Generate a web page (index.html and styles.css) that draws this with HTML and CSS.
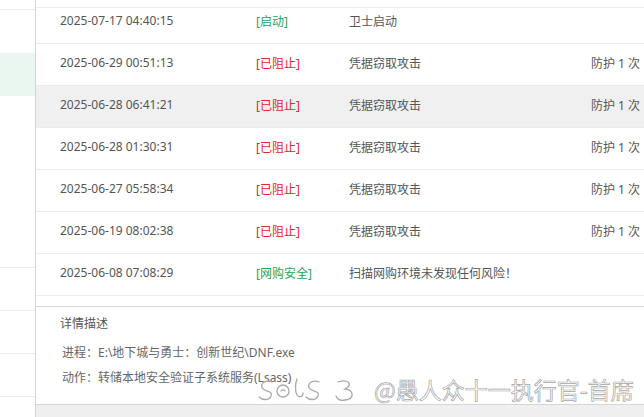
FILE: index.html
```html
<!DOCTYPE html>
<html lang="zh-CN">
<head>
  <meta charset="UTF-8">
  <title>防护日志</title>
  <link rel="stylesheet" href="styles.css">
</head>
<body>
  <div class="app">
    <aside class="side">
      <div class="side-top"></div>
      <div class="side-item active"></div>
      <div class="side-fill"></div>
      <div class="side-item"></div>
      <div class="side-item"></div>
      <div class="side-item"></div>
    </aside>

    <main class="main">
      <div class="head"></div>
      <div class="log">
        <div class="row first">
          <span class="c-time">2025-07-17 04:40:15</span>
          <span class="c-tag ok">[启动]</span>
          <span class="c-desc">卫士启动</span>
          <span class="c-count"></span>
        </div>
        <div class="row">
          <span class="c-time">2025-06-29 00:51:13</span>
          <span class="c-tag bad">[已阻止]</span>
          <span class="c-desc">凭据窃取攻击</span>
          <span class="c-count">防护 1 次</span>
        </div>
        <div class="row hover">
          <span class="c-time">2025-06-28 06:41:21</span>
          <span class="c-tag bad">[已阻止]</span>
          <span class="c-desc">凭据窃取攻击</span>
          <span class="c-count">防护 1 次</span>
        </div>
        <div class="row">
          <span class="c-time">2025-06-28 01:30:31</span>
          <span class="c-tag bad">[已阻止]</span>
          <span class="c-desc">凭据窃取攻击</span>
          <span class="c-count">防护 1 次</span>
        </div>
        <div class="row">
          <span class="c-time">2025-06-27 05:58:34</span>
          <span class="c-tag bad">[已阻止]</span>
          <span class="c-desc">凭据窃取攻击</span>
          <span class="c-count">防护 1 次</span>
        </div>
        <div class="row">
          <span class="c-time">2025-06-19 08:02:38</span>
          <span class="c-tag bad">[已阻止]</span>
          <span class="c-desc">凭据窃取攻击</span>
          <span class="c-count">防护 1 次</span>
        </div>
        <div class="row">
          <span class="c-time">2025-06-08 07:08:29</span>
          <span class="c-tag ok">[网购安全]</span>
          <span class="c-desc">扫描网购环境未发现任何风险！</span>
          <span class="c-count"></span>
        </div>
      </div>

      <section class="detail">
        <div class="detail-title">详情描述</div>
        <div class="detail-line">进程：E:\地下城与勇士：创新世纪\DNF.exe</div>
        <div class="detail-line">动作：转储本地安全验证子系统服务(Lsass)</div>
      </section>

      <div class="foot"></div>
    </main>
  </div>

  <div class="mark">
    <svg class="mark-logo" width="108" height="30" viewBox="0 0 108 30">
      <g fill="none" stroke="#a9a9a9" stroke-width="1.3" stroke-linecap="round">
        <path d="M16 8 C8 5 3 11 7 15 C11 18 17 17 15 22 C13 27 6 26 3 23"/>
        <circle cx="27" cy="17" r="6"/>
        <path d="M25 17 C26 15.5 28 15.5 29 17"/>
        <path d="M41 5 C39 10 39 17 41 21 C43 24 47 23 47 19"/>
        <path d="M63 8 C55 5 50 11 54 15 C58 18 64 17 62 22 C60 27 53 26 50 23"/>
        <path d="M82 8 C92 5 98 10 89 15 C98 16 99 25 89 26 C84 27 81 25 80 22"/>
      </g>
    </svg>
    <span class="mark-text">@愚人众十一执行官-首席</span>
  </div>
</body>
</html>
```

FILE: styles.css
```css
html, body {
  margin: 0;
  padding: 0;
}

body {
  width: 644px;
  height: 417px;
  overflow: hidden;
  background: #fff;
  font-family: "Noto Sans", "Noto Sans CJK SC", sans-serif;
  font-size: 12px;
  color: #555;
  position: relative;
}

.app {
  display: flex;
  height: 417px;
}

/* left nav, mostly cut off */
.side {
  width: 35px;
  border-right: 1px solid #d4d4d4;
  display: flex;
  flex-direction: column;
}

.side-top {
  height: 9px;
  border-bottom: 1px solid #ebebeb;
  flex-shrink: 0;
}

.side-item {
  height: 43px;
  border-bottom: 1px solid #ebebeb;
  box-sizing: border-box;
  flex-shrink: 0;
}

.side-item.active {
  margin-top: 43px;
  height: 43px;
  border-bottom: none;
  background: #eaf7f0;
}

.side-fill {
  height: 171px;
  border-bottom: 1px solid #ebebeb;
  flex-shrink: 0;
}

.main {
  flex: 1;
  display: flex;
  flex-direction: column;
  min-width: 0;
}

.head {
  height: 7px;
  border-bottom: 1px solid #ececec;
  flex-shrink: 0;
}

.row {
  display: flex;
  align-items: center;
  height: 42px;
  box-sizing: border-box;
  padding-bottom: 4px;
  border-bottom: 1px solid #ececec;
  white-space: nowrap;
}

.row.first {
  height: 36px;
  padding-bottom: 10px;
}

.row.hover {
  background: #f0f0f0;
}

.c-time {
  width: 196px;
  padding-left: 24px;
  flex-shrink: 0;
  color: #555;
}

.c-tag {
  width: 93px;
  flex-shrink: 0;
}

.c-tag.ok { color: #22a55a; }
.c-tag.bad { color: #e2262a; }

.c-desc {
  width: 242px;
  flex-shrink: 0;
  color: #555;
}

.c-count {
  color: #555;
}

.detail {
  margin-top: 10px;
  border-top: 1px solid #d6d6d6;
  flex: 1;
  padding: 8px 0 0 24px;
}

.detail-title {
  height: 17px;
  line-height: 17px;
  color: #555;
  margin-bottom: 12px;
}

.detail-line {
  padding-left: 2px;
  height: 17px;
  line-height: 17px;
  color: #666;
  margin-bottom: 8px;
}

.foot {
  height: 12px;
  border-top: 1px solid #d6d6d6;
  background: #efefef;
  flex-shrink: 0;
}

/* watermark laid over the page */
.mark {
  position: absolute;
  left: 256px;
  top: 374px;
  width: max-content;
  display: flex;
  align-items: center;
  gap: 10px;
  white-space: nowrap;
  pointer-events: none;
}

.mark-logo {
  flex-shrink: 0;
}

.mark-text {
  font-family: "Noto Sans CJK SC", sans-serif;
  font-size: 23px;
  line-height: 30px;
  color: rgba(255, 255, 255, 0.6);
  -webkit-text-stroke: 0.7px #a6a6a6;
}
```
